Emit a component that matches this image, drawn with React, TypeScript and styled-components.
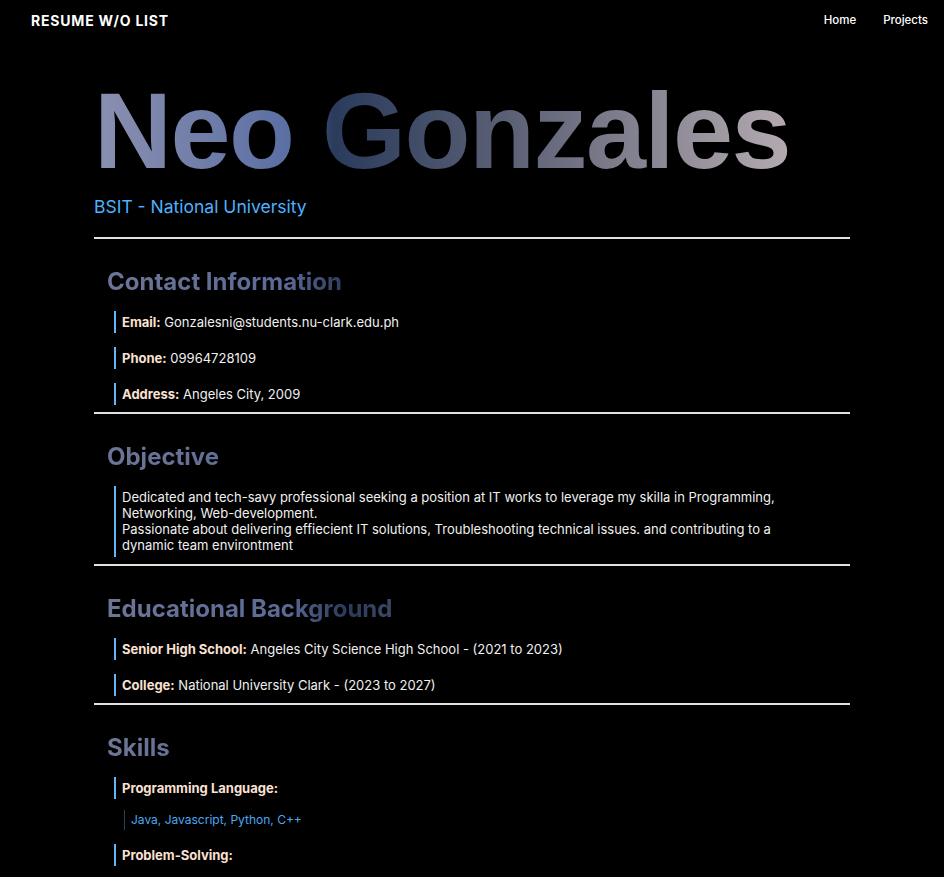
import React from "react";
import styled, { createGlobalStyle } from "styled-components";

const Global = createGlobalStyle`
  html, body { margin: 0; padding: 0; background: #000; }
  body { font-family: Inter, "Noto Sans", sans-serif; color: #ececec; }
  * { box-sizing: border-box; }
`;

const Page = styled.div`
  min-height: 877px;
  background: #000;
`;

const NavBar = styled.nav`
  height: 40px;
  display: flex;
  align-items: center;
  justify-content: space-between;
  padding: 0 16px 0 31px;
`;

const Brand = styled.div`
  font-family: Inter, sans-serif;
  font-weight: 700;
  font-size: 14px;
  letter-spacing: 0.8px;
  color: #fff;
`;

const NavLinks = styled.div`
  display: flex;
  gap: 27px;
`;

const NavLink = styled.a`
  font-family: Inter, sans-serif;
  font-size: 11.5px;
  font-weight: 500;
  color: #fff;
  text-decoration: none;
`;

const Main = styled.main`
  width: 756px;
  margin: 0 auto;
`;

const Hero = styled.header`
  padding-top: 31px;
  padding-bottom: 19px;
`;

const Name = styled.h1`
  display: inline-block;
  margin: 0;
  font-family: "Liberation Sans", Arial, sans-serif;
  font-weight: 700;
  font-size: 108px;
  line-height: 120px;
  letter-spacing: -1.5px;
  background: linear-gradient(
    90deg,
    #8b90b0 0px,
    #5a6ea3 200px,
    #2a3b5c 240px,
    #5d6276 420px,
    #b4aab0 695px
  );
  -webkit-background-clip: text;
  background-clip: text;
  color: transparent;
`;

const Subtitle = styled.div`
  font-size: 17.5px;
  line-height: 22px;
  color: #4db2ff;
  margin-top: 5px;
`;

const Rule = styled.hr`
  margin: 0;
  border: none;
  height: 2px;
  background: #e2e2e2;
`;

const Section = styled.section`
  padding: 0 13px 7px;
`;

const Heading = styled.h2`
  display: inline-block;
  margin: 28px 0 15px;
  font-family: Inter, sans-serif;
  font-weight: 700;
  font-size: 24px;
  line-height: 29px;
  background: linear-gradient(
    90deg,
    #6e7596 0px,
    #5b6a97 180px,
    #2a3a5a 240px,
    #6a6e80 400px
  );
  -webkit-background-clip: text;
  background-clip: text;
  color: transparent;
`;

const List = styled.div`
  display: flex;
  flex-direction: column;
  gap: 14px;
`;

const Item = styled.div`
  margin-left: 7px;
  padding-left: 6px;
  border-left: 2px solid #64b5f6;
  font-size: 13px;
  line-height: 22px;
  color: #f0f0f0;
`;

const Paragraph = styled.p`
  max-width: 670px;
  margin: 0 0 0 7px;
  padding: 3px 6px 4px;
  border-left: 2px solid #64b5f6;
  font-size: 13px;
  line-height: 16px;
  color: #f0f0f0;
`;

const Label = styled.b`
  font-weight: 700;
  color: #fbe1d3;
`;

const Group = styled.div`
  display: flex;
  flex-direction: column;
`;

const SubItem = styled.div`
  margin: 11px 0 0 17px;
  padding-left: 6px;
  border-left: 1px solid #2c3c5c;
  font-size: 12px;
  line-height: 20px;
  color: #4aa8f2;
`;

const contacts = [
  ["Email:", "Gonzalesni@students.nu-clark.edu.ph"],
  ["Phone:", "09964728109"],
  ["Address:", "Angeles City, 2009"],
];

const education = [
  ["Senior High School:", "Angeles City Science High School - (2021 to 2023)"],
  ["College:", "National University Clark - (2023 to 2027)"],
];

const skills = [
  ["Programming Language:", "Java, Javascript, Python, C++"],
  ["Problem-Solving:", "Analytical thinking, Debugging, Troubleshooting"],
];

export default function App() {
  return (
    <Page>
      <Global />
      <NavBar>
        <Brand>RESUME W/O LIST</Brand>
        <NavLinks>
          <NavLink href="#">Home</NavLink>
          <NavLink href="#">Projects</NavLink>
        </NavLinks>
      </NavBar>
      <Main>
        <Hero>
          <Name>Neo Gonzales</Name>
          <Subtitle>BSIT - National University</Subtitle>
        </Hero>
        <Rule />
        <Section>
          <Heading>Contact Information</Heading>
          <List>
            {contacts.map(([l, v]) => (
              <Item key={l}>
                <Label>{l}</Label> {v}
              </Item>
            ))}
          </List>
        </Section>
        <Rule />
        <Section>
          <Heading>Objective</Heading>
          <Paragraph>
            Dedicated and tech-savy professional seeking a position at IT works to leverage my skilla in Programming, Networking, Web-development.
            <br />
            Passionate about delivering effiecient IT solutions, Troubleshooting technical issues. and contributing to a dynamic team environtment
          </Paragraph>
        </Section>
        <Rule />
        <Section>
          <Heading>Educational Background</Heading>
          <List>
            {education.map(([l, v]) => (
              <Item key={l}>
                <Label>{l}</Label> {v}
              </Item>
            ))}
          </List>
        </Section>
        <Rule />
        <Section>
          <Heading>Skills</Heading>
          <List>
            {skills.map(([l, v]) => (
              <Group key={l}>
                <Item>
                  <Label>{l}</Label>
                </Item>
                <SubItem>{v}</SubItem>
              </Group>
            ))}
          </List>
        </Section>
      </Main>
    </Page>
  );
}
